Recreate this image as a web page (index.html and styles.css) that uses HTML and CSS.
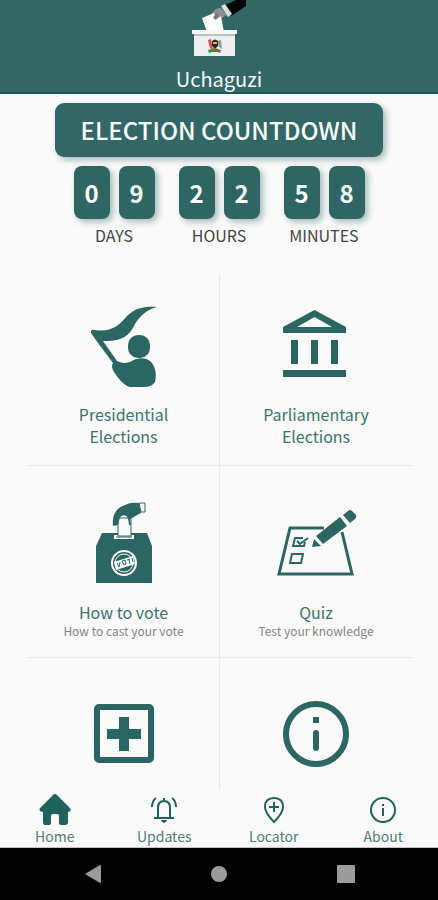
FILE: index.html
```html
<!DOCTYPE html>
<html lang="en">
<head>
<meta charset="utf-8">
<meta name="viewport" content="width=device-width, initial-scale=1">
<title>Uchaguzi</title>
<link rel="stylesheet" href="styles.css">
</head>
<body>
<header class="app-header">
  <svg class="app-logo" width="72" height="60" viewBox="180 0 72 60" aria-hidden="true">
    <path fill="#050607" d="M223 6 236 0H246V6L231 16Z"/>
    <path fill="#d8dedf" d="M221 6 225 4 232 14 228 17Z"/>
    <path fill="#8e8e8e" d="M213 12Q215 8 221 8L227 15Q222 17 220 21L216 19 211 14Z"/>
    <path fill="#fcfdfd" d="M202 18 214 13 217 19 221 16 224 32H207Z"/>
    <path fill="#777" d="M216 13 219 15 216 20 213 18Z"/>
    <path fill="#f7f7f7" d="M192 30H237V34H192Z"/>
    <path fill="#bcc3c3" d="M194 34H235V36H194Z"/>
    <path fill="#efefef" d="M194 36H235V56H194Z"/>
    <path fill="#d94d50" d="M208 40 211 39 213 50 210 48Z"/>
    <path fill="#999" d="M217 41 221 40 222 49 219 47Z"/>
    <path fill="#292b30" d="M212 41Q215 38 218 41V46L215 49 212 46Z"/>
    <path fill="#e4b92e" d="M213 42H217V44H213Z"/>
    <path fill="#5c7a45" d="M208 50 215 48 221 50 220 53 215 51 209 53Z"/>
    <path fill="#b94040" d="M211 51H219V52H211Z"/>
  </svg>
  <h1 class="app-name">Uchaguzi</h1>
</header>

<main class="content">
  <section class="countdown" aria-labelledby="countdown-title">
    <h2 class="banner" id="countdown-title">ELECTION COUNTDOWN</h2>
    <div class="units">
      <div class="unit">
        <div class="digits"><span class="digit">0</span><span class="digit">9</span></div>
        <span class="unit-name">DAYS</span>
      </div>
      <div class="unit">
        <div class="digits"><span class="digit">2</span><span class="digit">2</span></div>
        <span class="unit-name">HOURS</span>
      </div>
      <div class="unit">
        <div class="digits"><span class="digit">5</span><span class="digit">8</span></div>
        <span class="unit-name">MINUTES</span>
      </div>
    </div>
  </section>

  <div class="tiles">
    <a class="tile" href="#presidential">
      <svg class="tile-icon" viewBox="75 298 96 96" aria-hidden="true">
        <path fill="currentColor" d="M90 331Q91 329 94 330C111 333 119 324 126 316C134 308 144 306 156 307C145 310 139 316 134 324C128 337 119 342 102 341L116 361C122 364 127 363 131 361C137 357 147 357 151 363C156 370 155 378 154 382Q151 387 143 387H129C123 386 115 376 112 370Q110 366 112 363L97 343 90 333Z"/>
        <rect fill="currentColor" x="127" y="335" width="22" height="23" rx="10"/>
      </svg>
      <span class="tile-title">Presidential<br>Elections</span>
    </a>
    <a class="tile" href="#parliamentary">
      <svg class="tile-icon" viewBox="267 298 96 96" aria-hidden="true">
        <path fill="currentColor" fill-rule="evenodd" d="M313.500 310 345 327V333H282V327ZM313.500 317 296 327H331ZM290 340H297V364H290ZM310 340H317V364H310ZM330 340H337V364H330ZM282 370H345V377H282Z"/>
      </svg>
      <span class="tile-title">Parliamentary<br>Elections</span>
    </a>
    <a class="tile tile-noted" href="#how-to-vote">
      <svg class="tile-icon" viewBox="75 495 96 96" aria-hidden="true">
        <path fill="currentColor" d="M101 532H146L151 545V582H95V545Z"/>
        <path fill="#fafafa" d="M113 534H133V538H113Z"/>
        <path fill="#fafafa" stroke="currentColor" d="M117 517H130V535H117Z"/>
        <path fill="none" stroke="currentColor" d="M115 536H131"/>
        <path fill="currentColor" d="M112 525C111 514 115 507 124 504Q129 501 138 502L140 512 129 518 130 524H128L127 517Q124 512 119 516L117 524Z"/>
        <path fill="#fafafa" stroke="currentColor" d="M138 502H144V511H140Z"/>
        <circle cx="123" cy="562" r="12" fill="none" stroke="#fafafa" stroke-width="2"/>
        <circle cx="123" cy="562" r="9" fill="none" stroke="#fafafa"/>
        <path fill="#fafafa" d="M113 561 132 555 134 563 115 569Z"/>
        <path fill="none" stroke="currentColor" d="M116 562 118 566 119 561M121 560 123 564 125 563 124 559ZM126 559 129 558M128 559 129 563M131 557 132 561"/>
      </svg>
      <span class="tile-title">How to vote</span>
      <span class="tile-note">How to cast your vote</span>
    </a>
    <a class="tile tile-noted" href="#quiz">
      <svg class="tile-icon" viewBox="267 495 96 96" aria-hidden="true">
        <path fill="none" stroke="currentColor" stroke-width="3" d="M323 527H289L278 573H351L341 531"/>
        <path fill="none" stroke="currentColor" stroke-width="2" d="M302 537H294L292 545H303L304 541M291 553H302L300 562H289ZM296 540 299 543 307 537"/>
        <path fill="currentColor" d="M315 535 339 516 346 525 322 543ZM342 514 347 510Q349 508 351 510L355 514Q356 516 354 518L349 522ZM313 538 320 545 311 546Z"/>
      </svg>
      <span class="tile-title">Quiz</span>
      <span class="tile-note">Test your knowledge</span>
    </a>
    <a class="tile tile-last" href="#more" aria-label="More">
      <svg class="tile-icon" viewBox="75 686 96 96" aria-hidden="true">
        <rect x="96" y="707" width="54" height="53" rx="2" fill="none" stroke="currentColor" stroke-width="6"/>
        <path fill="currentColor" d="M118 717H128V729H140V739H128V751H118V739H106V729H118Z"/>
      </svg>
    </a>
    <a class="tile tile-last" href="#information" aria-label="Information">
      <svg class="tile-icon" viewBox="267 686 96 96" aria-hidden="true">
        <circle cx="315" cy="734" r="30" fill="none" stroke="currentColor" stroke-width="6"/>
        <path fill="currentColor" d="M312 717H318V723H312Z"/>
        <rect x="312" y="730" width="6" height="21" rx="3" fill="currentColor"/>
      </svg>
    </a>
  </div>
</main>

<nav class="tabs" aria-label="Main">
  <a class="tab" href="#home" aria-current="page">
    <svg class="tab-icon" viewBox="0 0 34 34" aria-hidden="true">
      <path fill="currentColor" d="M15 2Q17 0 19 2L32 15Q34 18 30 19V29Q30 32 27 32H23Q21 32 21 30V23Q21 21 19 21H15Q13 21 13 23V30Q13 32 11 32H7Q5 32 5 29V19Q0 18 2 15Z"/>
    </svg>
    <span>Home</span>
  </a>
  <a class="tab" href="#updates">
    <svg class="tab-icon" viewBox="0 0 34 34" aria-hidden="true">
      <g fill="none" stroke="currentColor" stroke-width="2">
        <path d="M11 25V15Q11 8 17 8Q23 8 23 15V25M7 25H27M17 5V8M9 5Q5 8 5 14M25 5Q29 8 29 14"/>
      </g>
      <path fill="currentColor" d="M14 27H20Q19 30 17 30Q15 30 14 27Z"/>
    </svg>
    <span>Updates</span>
  </a>
  <a class="tab" href="#locator">
    <svg class="tab-icon" viewBox="0 0 34 34" aria-hidden="true">
      <path fill="none" stroke="currentColor" stroke-width="2" d="M17 29Q8 20 8 14Q8 5 17 5Q26 5 26 14Q26 20 17 29ZM17 9V19M12 14H22"/>
    </svg>
    <span>Locator</span>
  </a>
  <a class="tab" href="#about">
    <svg class="tab-icon" viewBox="0 0 34 34" aria-hidden="true">
      <circle cx="17" cy="17" r="12" fill="none" stroke="currentColor" stroke-width="2"/>
      <path fill="currentColor" d="M16 11H18V13H16ZM16 15H18V23H16Z"/>
    </svg>
    <span>About</span>
  </a>
</nav>

<div class="system-bar">
  <button class="system-button" type="button" aria-label="Back">
    <svg width="20" height="20" viewBox="0 0 20 20"><path fill="currentColor" d="M2 10 17 1Q18 1 18 2V18Q18 19 17 19Z"/></svg>
  </button>
  <button class="system-button" type="button" aria-label="Home screen">
    <svg width="20" height="20" viewBox="0 0 20 20"><circle cx="10" cy="10" r="8" fill="currentColor"/></svg>
  </button>
  <button class="system-button" type="button" aria-label="Recent apps">
    <svg width="20" height="20" viewBox="0 0 20 20"><rect x="1" y="1" width="18" height="18" rx="1" fill="currentColor"/></svg>
  </button>
</div>
</body>
</html>
```

FILE: styles.css
```css
* {
  box-sizing: border-box;
}

body {
  --teal: #2c6663;
  display: flex;
  flex-direction: column;
  height: 100vh;
  margin: 0;
  background: #fafafa;
  font-family: "Noto Sans CJK SC", "Noto Sans", sans-serif;
}

a {
  color: inherit;
  text-decoration: none;
}

svg {
  display: block;
}

.app-header {
  display: flex;
  flex: none;
  flex-direction: column;
  align-items: center;
  padding-bottom: 1px;
  border-bottom: 2px solid #175b59;
  background: #336766;
  color: #f4fafa;
}

.app-logo {
  margin-right: 6px;
}

.app-name {
  margin: 6px 0 0;
  font-size: 20px;
  font-weight: 400;
  line-height: 25px;
}

.content {
  flex: 1;
  min-height: 0;
  overflow: hidden;
}

.countdown {
  display: flex;
  flex-direction: column;
  align-items: center;
  padding-top: 9px;
}

.banner {
  width: 75%;
  margin: 0;
  border-radius: 9px;
  background: #336766;
  box-shadow: 3px 3px 6px rgba(40, 90, 90, 0.4);
  color: #fafdfd;
  font-size: 24px;
  font-weight: 500;
  line-height: 54px;
  text-align: center;
  white-space: nowrap;
}

.units {
  display: flex;
  gap: 24px;
  margin-top: 9px;
}

.unit {
  display: flex;
  flex-direction: column;
  align-items: center;
}

.digits {
  display: flex;
  gap: 9px;
}

.digit {
  width: 36px;
  border-radius: 8px;
  background: #2f6664;
  box-shadow: 3px 3px 6px rgba(40, 90, 90, 0.4);
  color: #fafdfd;
  font-size: 24px;
  font-weight: 700;
  line-height: 53px;
  text-align: center;
}

.unit-name {
  margin-top: 5px;
  color: #454545;
  font-size: 16px;
  line-height: 22px;
}

.tiles {
  display: grid;
  grid-template-columns: 1fr 1fr;
  grid-auto-rows: 192px;
  margin: 28px 26px 0 28px;
}

.tile {
  display: flex;
  flex-direction: column;
  align-items: center;
  padding-top: 24px;
  border-bottom: 1px solid #e9e9e9;
  color: var(--teal);
  text-align: center;
}

.tile:nth-child(odd) {
  border-right: 1px solid #e9e9e9;
}

.tile-noted {
  padding-top: 30px;
}

.tile-last {
  padding-top: 28px;
}

.tile-icon {
  width: 96px;
  height: 96px;
}

.tile-title {
  margin-top: 9px;
  color: #3b7370;
  font-size: 16px;
  line-height: 22px;
}

.tile-note {
  color: #858585;
  font-size: 12px;
  line-height: 16px;
}

.tabs {
  display: grid;
  flex: none;
  grid-template-columns: repeat(4, 1fr);
  padding: 3px 0 2px;
  border-bottom: 1px solid #c4c4c4;
}

.tab {
  display: flex;
  flex-direction: column;
  align-items: center;
  color: #20625e;
}

.tab-icon {
  width: 34px;
  height: 34px;
}

.tab span {
  color: #527a78;
  font-size: 14px;
  line-height: 18px;
}

.system-bar {
  display: flex;
  flex: none;
  justify-content: space-evenly;
  height: 52px;
  background: #000;
}

.system-button {
  display: flex;
  align-items: center;
  justify-content: center;
  width: 68px;
  padding: 0;
  border: 0;
  background: none;
  color: #9b9b9b;
}
```
